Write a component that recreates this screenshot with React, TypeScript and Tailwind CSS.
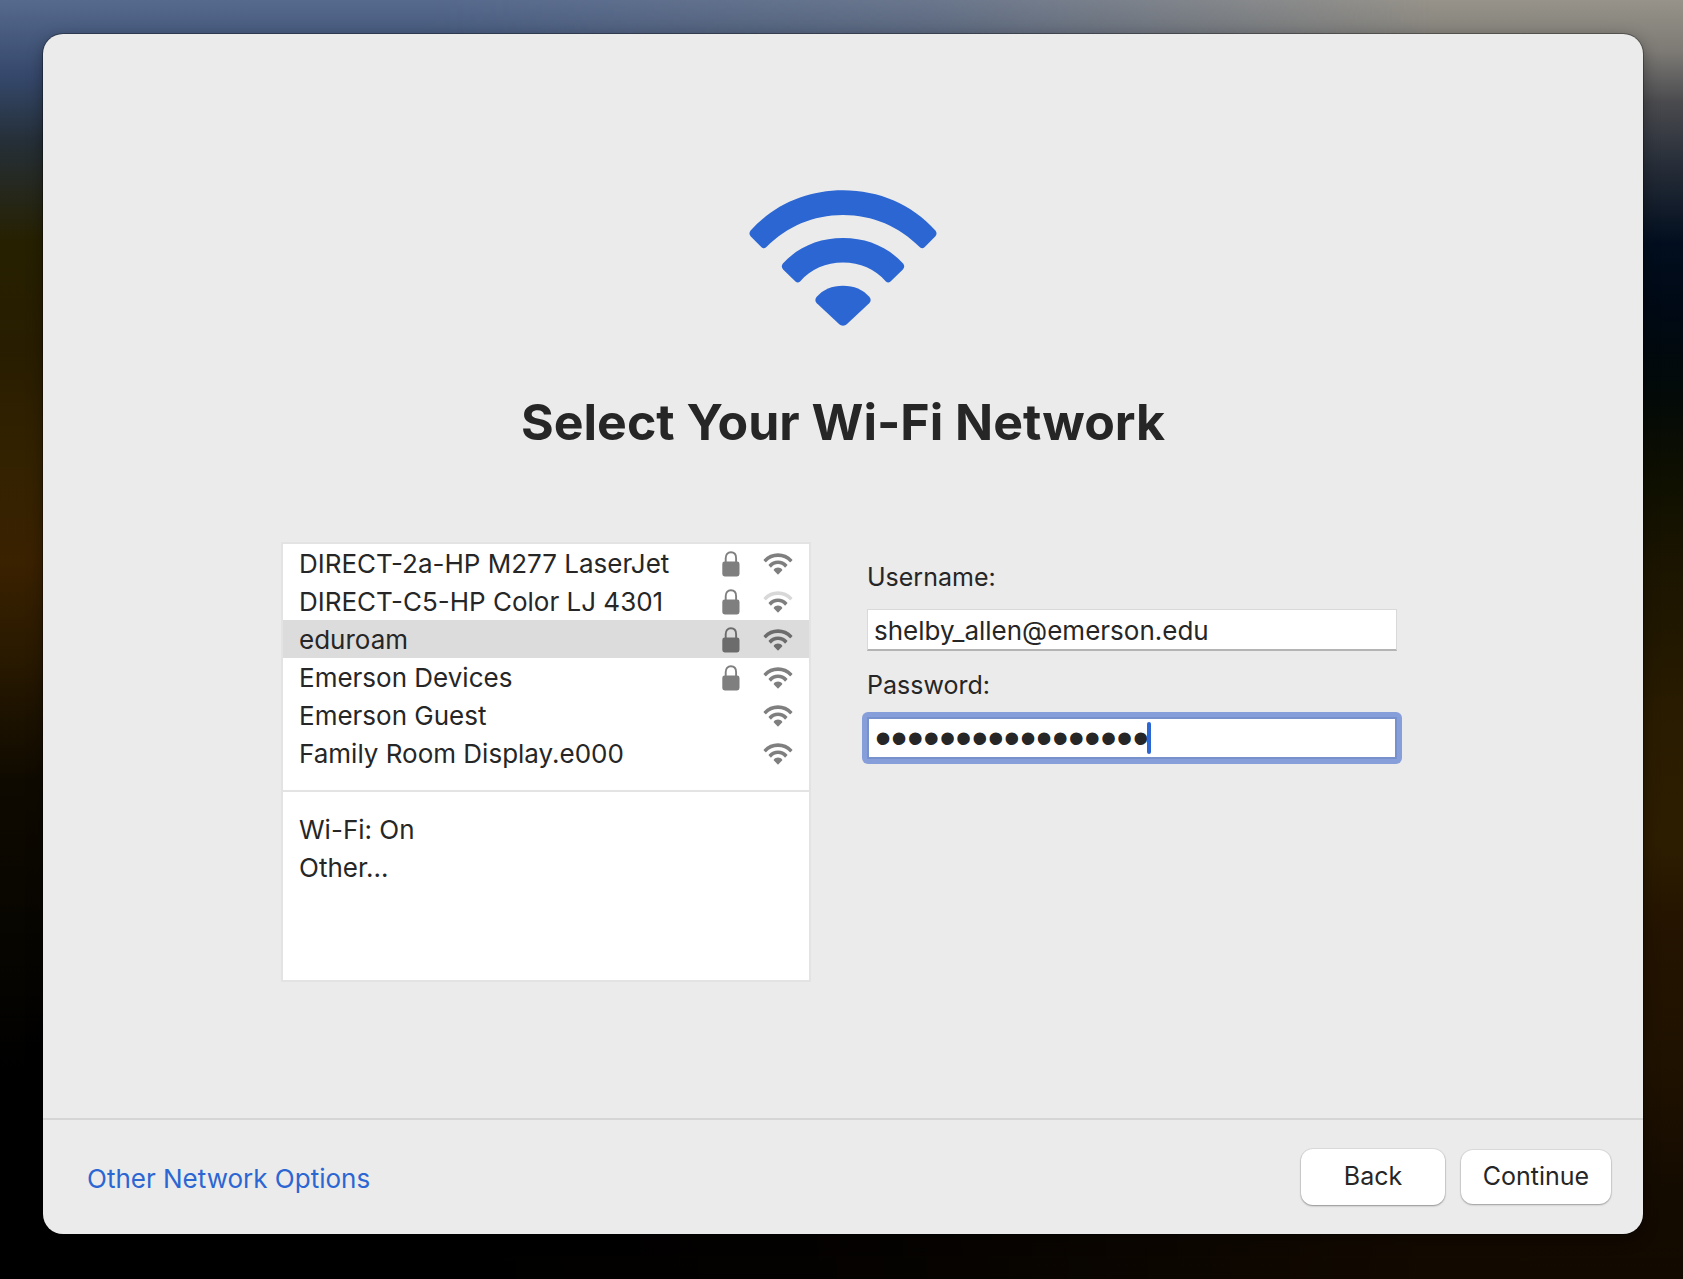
import { useId } from "react";

type Network = { name: string; locked: boolean; weak?: boolean };

const networks: Network[] = [
  { name: "DIRECT-2a-HP M277 LaserJet", locked: true },
  { name: "DIRECT-C5-HP Color LJ 4301", locked: true, weak: true },
  { name: "eduroam", locked: true },
  { name: "Emerson Devices", locked: true },
  { name: "Emerson Guest", locked: false },
  { name: "Family Room Display.e000", locked: false },
];

function WifiLogo() {
  return (
    <svg viewBox="0 0 188 136" className="h-[136px] w-[188px] text-[#2b66d3]" fill="currentColor" aria-hidden="true">
      <path d="M1.6 40.500C25 14.500 58 .3 94 .3s69 14.200 92.400 40.200c1.600 1.900 1.500 4.200-.2 6L175.500 57.300c-1.500 1.400-3.200 1.300-4.600-.1C150 36.600 124 25 94 25S38 36.600 17.100 57.200c-1.400 1.400-3.100 1.500-4.600.1L1.800 46.500c-1.700-1.800-1.800-4.100-.2-6Z" />
      <path d="M33.900 73.500C49 57 70 48 94 48s45 9 60.100 25.500c1.600 1.900 1.500 4.100-.2 5.900L141.500 91.600c-1.500 1.400-3.200 1.300-4.600-.1C126 79 111 72.500 94 72.500S62 79 51.100 91.500c-1.400 1.400-3.100 1.500-4.600.1L34.100 79.400c-1.700-1.800-1.800-4-.2-5.900Z" />
      <path d="M67.500 107C74 99.500 83 95.700 94 95.700S114 99.500 120.500 107c1.600 2 1.500 4.500-.3 6.300L98 134c-2.500 2.300-5.500 2.300-8 0L67.800 113.300c-1.800-1.800-1.900-4.300-.3-6.300Z" />
    </svg>
  );
}

function SignalIcon({ weak }: { weak?: boolean }) {
  return (
    <svg viewBox="0 0 30 22" className="h-[22px] w-[30px]" fill="currentColor" role="img" aria-label="Signal strength">
      <path
        className={weak ? "text-[#d8d8d8]" : ""}
        d="M.8 6.400C4.500 2.400 9.500.3 15 .3s10.500 2.100 14.200 6.100c.3.300.3.700 0 1l-1.500 1.600c-.3.300-.7.300-1 0C23.600 5.800 19.700 4 15 4S6.400 5.800 3.300 9c-.3.300-.7.300-1 0L.8 7.400c-.3-.3-.3-.7 0-1Z"
      />
      <path d="M5.800 11.500c2.400-2.600 5.600-4.100 9.200-4.100s6.800 1.500 9.200 4.100c.3.300.3.700 0 1l-1.600 1.700c-.3.300-.7.300-1 0-1.800-2-4-3.100-6.600-3.100s-4.800 1.100-6.600 3.100c-.3.300-.7.300-1 0L5.800 12.500c-.3-.3-.3-.7 0-1Z" />
      <path d="M10.900 16.500c1-1.200 2.500-1.900 4.100-1.900s3.100.7 4.100 1.900c.3.300.3.700 0 1L15.500 21.200c-.3.300-.7.300-1 0l-3.600-3.700c-.3-.3-.3-.7 0-1Z" />
    </svg>
  );
}

function LockIcon() {
  return (
    <svg viewBox="0 0 18 26" className="h-[26px] w-[18px]" fill="currentColor" role="img" aria-label="Secured">
      <rect x="0.300" y="10.600" width="17.200" height="14.900" rx="2.400" />
      <path d="M3.700 12V7.200C3.700 3.500 5.700 1.300 8.900 1.300s5.200 2.200 5.200 5.900V12" fill="none" stroke="currentColor" strokeWidth="1.900" />
    </svg>
  );
}

function NetworkList() {
  return (
    <section aria-label="Networks" className="min-h-[440px] border-2 border-[#e3e3e3] bg-white text-[26px]">
      <ul>
        {networks.map((n) => (
          <li key={n.name}>
            <button
              type="button"
              aria-pressed={n.name === "eduroam"}
              className={
                n.name === "eduroam"
                  ? "flex h-[38px] w-full items-center bg-[#dcdcdc] px-4 text-left text-[#6c6c6c]"
                  : "flex h-[38px] w-full items-center px-4 text-left text-[#7f7f7f]"
              }
            >
              <span className="flex-1 text-[#262626]">{n.name}</span>
              <span className="flex items-center gap-[23px] pt-0.5">
                {n.locked && <LockIcon />}
                <SignalIcon weak={n.weak} />
              </span>
            </button>
          </li>
        ))}
      </ul>
      <hr className="my-[18px] border-t-2 border-[#e3e3e3]" />
      <ul>
        {["Wi-Fi: On", "Other..."].map((label) => (
          <li key={label}>
            <button type="button" className="flex h-[38px] w-full items-center px-4 text-left">
              {label}
            </button>
          </li>
        ))}
      </ul>
    </section>
  );
}

function Credentials() {
  const userId = useId();
  const passId = useId();
  return (
    <form className="flex flex-col pt-[19px]">
      <label htmlFor={userId} className="leading-8">
        Username:
      </label>
      <input
        id={userId}
        type="text"
        defaultValue="shelby_allen@emerson.edu"
        className="mt-4 h-[42px] border border-b-2 border-[#d9d9d9] border-b-[#b4b4b4] bg-white px-[6px] pt-0.5 text-[26px] outline-none"
      />
      <label htmlFor={passId} className="mt-[18px] leading-8">
        Password:
      </label>
      <div className="relative -mx-[5px] mt-[11px] flex rounded-md bg-[#869fda] p-[5px]">
        <input
          id={passId}
          type="password"
          defaultValue="emersonlion-20245"
          className="h-[42px] w-full border-2 border-[#7691cc] bg-white px-[6px] font-['Liberation_Sans',sans-serif] text-[46px] outline-none"
        />
        <span className="absolute top-[10px] left-[285px] h-8 w-1 rounded-full bg-[#2b66d3]" />
      </div>
    </form>
  );
}

export default function App() {
  return (
    <div className="relative isolate flex min-h-screen bg-[linear-gradient(180deg,#566a8e_0%,#35486b_6%,#252f38_11%,#262000_19%,#281d00_27%,#332200_36%,#3a2100_44%,#2a1a00_51%,#0f0a00_61%,#050400_77%,#000_84%)] pt-[34px] pr-10 pb-[45px] pl-[43px] font-['Inter',sans-serif] text-[25px] text-[#262626]">
      <div className="absolute inset-0 -z-10 bg-[linear-gradient(180deg,#97938a_0%,#7d7a75_4%,#4a4a4e_8%,#262d38_13%,#020e1f_19%,#000915_24%,#030a08_31%,#101000_38%,#1c1500_45%,#2a1c00_57%,#2d1d00_66%,#231300_73%,#201200_83%,#140b00_93%,#120900_100%)] mask-[linear-gradient(90deg,transparent_25%,rgba(0,0,0,.3)_55%,#000_85%)]" />
      <main className="flex flex-1 flex-col rounded-[20px] bg-[#ebebeb] shadow-[0_0_0_1px_rgba(0,0,0,0.3),0_4px_16px_rgba(0,0,0,0.35)]">
        <div className="flex flex-1 flex-col items-center pt-[156px]">
          <WifiLogo />
          <h1 className="mt-16 text-[50px] leading-[64px] font-bold">Select Your Wi-Fi Network</h1>
          <div className="mt-[88px] grid w-full grid-cols-2 gap-14 pr-[246px] pl-[238px]">
            <NetworkList />
            <Credentials />
          </div>
        </div>
        <footer className="flex h-[116px] items-center border-t-2 border-[#d5d5d5] pr-8 pl-11">
          <div className="flex-1 pt-0.5 text-[26px]">
            <a href="#options" className="text-[#2b66d3]">
              Other Network Options
            </a>
          </div>
          <button
            type="button"
            className="h-14 w-36 rounded-xl bg-white shadow-[0_0_0_1px_rgba(0,0,0,0.06),0_1px_2px_rgba(0,0,0,0.35)]"
          >
            Back
          </button>
          <button
            type="button"
            className="ml-4 h-[54px] w-[150px] rounded-xl bg-white shadow-[0_0_0_1px_rgba(0,0,0,0.06),0_1px_2px_rgba(0,0,0,0.3)]"
          >
            Continue
          </button>
        </footer>
      </main>
    </div>
  );
}
